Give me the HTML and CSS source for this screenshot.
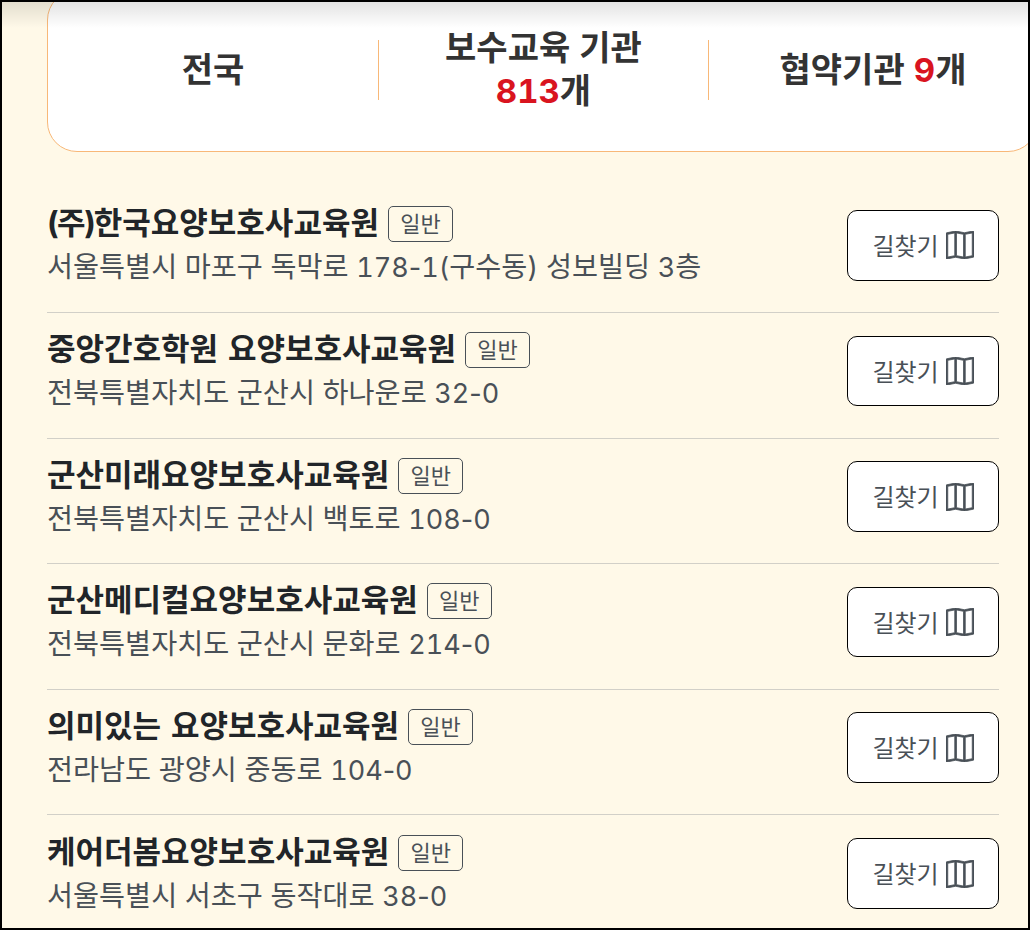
FILE: index.html
```html
<!DOCTYPE html>
<html lang="ko">
  <head>
    <meta charset="utf-8">
    <title>보수교육 기관</title>
    <link rel="stylesheet" href="styles.css">
  </head>
  <body>
    <div class="frame">
      <div class="top-shadow"></div>

      <div class="summary">
        <div class="summary-item">전국</div>
        <div class="summary-item">
          <div>보수교육 기관<br><span class="count">813</span>개</div>
        </div>
        <div class="summary-item">
          <div>협약기관 <span class="count">9</span>개</div>
        </div>
      </div>

      <ul class="center-list">
        <li class="center">
          <div class="center-info">
            <div class="center-name"><span class="corp-mark">(주)</span>한국요양보호사교육원<span class="badge">일반</span></div>
            <div class="center-address">서울특별시 마포구 독막로 <span class="road-no">178<span class="dash">-</span>1(</span>구수동) 성보빌딩 <span class="road-no">3</span>층</div>
          </div>
          <a class="route-button" href="#">길찾기 <svg class="map-icon" viewBox="0 0 16 16"><path d="M15.817.113A.5.5 0 0 1 16 .5v14a.5.5 0 0 1-.402.49l-5 1a.502.502 0 0 1-.196 0L5.5 15.01l-4.902.98A.5.5 0 0 1 0 15.5v-14a.5.5 0 0 1 .402-.49l5-1a.5.5 0 0 1 .196 0L10.5.99l4.902-.98a.5.5 0 0 1 .415.103zM10 1.91l-4-.8v12.98l4 .8V1.91zm1 12.98 4-.8V1.11l-4 .8v12.98zm-6-.8V1.11l-4 .8v12.98l4-.8z"/></svg></a>
        </li>
        <li class="center">
          <div class="center-info">
            <div class="center-name">중앙간호학원 요양보호사교육원<span class="badge">일반</span></div>
            <div class="center-address">전북특별자치도 군산시 하나운로 <span class="road-no">32<span class="dash">-</span>0</span></div>
          </div>
          <a class="route-button" href="#">길찾기 <svg class="map-icon" viewBox="0 0 16 16"><path d="M15.817.113A.5.5 0 0 1 16 .5v14a.5.5 0 0 1-.402.49l-5 1a.502.502 0 0 1-.196 0L5.5 15.01l-4.902.98A.5.5 0 0 1 0 15.5v-14a.5.5 0 0 1 .402-.49l5-1a.5.5 0 0 1 .196 0L10.5.99l4.902-.98a.5.5 0 0 1 .415.103zM10 1.91l-4-.8v12.98l4 .8V1.91zm1 12.98 4-.8V1.11l-4 .8v12.98zm-6-.8V1.11l-4 .8v12.98l4-.8z"/></svg></a>
        </li>
        <li class="center">
          <div class="center-info">
            <div class="center-name">군산미래요양보호사교육원<span class="badge">일반</span></div>
            <div class="center-address">전북특별자치도 군산시 백토로 <span class="road-no">108<span class="dash">-</span>0</span></div>
          </div>
          <a class="route-button" href="#">길찾기 <svg class="map-icon" viewBox="0 0 16 16"><path d="M15.817.113A.5.5 0 0 1 16 .5v14a.5.5 0 0 1-.402.49l-5 1a.502.502 0 0 1-.196 0L5.5 15.01l-4.902.98A.5.5 0 0 1 0 15.5v-14a.5.5 0 0 1 .402-.49l5-1a.5.5 0 0 1 .196 0L10.5.99l4.902-.98a.5.5 0 0 1 .415.103zM10 1.91l-4-.8v12.98l4 .8V1.91zm1 12.98 4-.8V1.11l-4 .8v12.98zm-6-.8V1.11l-4 .8v12.98l4-.8z"/></svg></a>
        </li>
        <li class="center">
          <div class="center-info">
            <div class="center-name">군산메디컬요양보호사교육원<span class="badge">일반</span></div>
            <div class="center-address">전북특별자치도 군산시 문화로 <span class="road-no">214<span class="dash">-</span>0</span></div>
          </div>
          <a class="route-button" href="#">길찾기 <svg class="map-icon" viewBox="0 0 16 16"><path d="M15.817.113A.5.5 0 0 1 16 .5v14a.5.5 0 0 1-.402.49l-5 1a.502.502 0 0 1-.196 0L5.5 15.01l-4.902.98A.5.5 0 0 1 0 15.5v-14a.5.5 0 0 1 .402-.49l5-1a.5.5 0 0 1 .196 0L10.5.99l4.902-.98a.5.5 0 0 1 .415.103zM10 1.91l-4-.8v12.98l4 .8V1.91zm1 12.98 4-.8V1.11l-4 .8v12.98zm-6-.8V1.11l-4 .8v12.98l4-.8z"/></svg></a>
        </li>
        <li class="center">
          <div class="center-info">
            <div class="center-name">의미있는 요양보호사교육원<span class="badge">일반</span></div>
            <div class="center-address">전라남도 광양시 중동로 <span class="road-no">104<span class="dash">-</span>0</span></div>
          </div>
          <a class="route-button" href="#">길찾기 <svg class="map-icon" viewBox="0 0 16 16"><path d="M15.817.113A.5.5 0 0 1 16 .5v14a.5.5 0 0 1-.402.49l-5 1a.502.502 0 0 1-.196 0L5.5 15.01l-4.902.98A.5.5 0 0 1 0 15.5v-14a.5.5 0 0 1 .402-.49l5-1a.5.5 0 0 1 .196 0L10.5.99l4.902-.98a.5.5 0 0 1 .415.103zM10 1.91l-4-.8v12.98l4 .8V1.91zm1 12.98 4-.8V1.11l-4 .8v12.98zm-6-.8V1.11l-4 .8v12.98l4-.8z"/></svg></a>
        </li>
        <li class="center">
          <div class="center-info">
            <div class="center-name">케어더봄요양보호사교육원<span class="badge">일반</span></div>
            <div class="center-address">서울특별시 서초구 동작대로 <span class="road-no">38<span class="dash">-</span>0</span></div>
          </div>
          <a class="route-button" href="#">길찾기 <svg class="map-icon" viewBox="0 0 16 16"><path d="M15.817.113A.5.5 0 0 1 16 .5v14a.5.5 0 0 1-.402.49l-5 1a.502.502 0 0 1-.196 0L5.5 15.01l-4.902.98A.5.5 0 0 1 0 15.5v-14a.5.5 0 0 1 .402-.49l5-1a.5.5 0 0 1 .196 0L10.5.99l4.902-.98a.5.5 0 0 1 .415.103zM10 1.91l-4-.8v12.98l4 .8V1.91zm1 12.98 4-.8V1.11l-4 .8v12.98zm-6-.8V1.11l-4 .8v12.98l4-.8z"/></svg></a>
        </li>
      </ul>
    </div>
  </body>
</html>
```

FILE: styles.css
```css
* {
  box-sizing: border-box;
}
html,
body {
  margin: 0;
  padding: 0;
  height: 930px;
  overflow: hidden;
}
body {
  font-family: Inter, "Noto Sans CJK KR", sans-serif;
  font-variant-numeric: tabular-nums;
  color: #212529;
}
.frame {
  position: relative;
  width: 1030px;
  height: 930px;
  border: 2px solid #000;
  background-color: #fff9e8;
  overflow: hidden;
}
.top-shadow {
  position: absolute;
  top: 0;
  left: 0;
  right: 0;
  height: 26px;
  background: linear-gradient(to bottom, rgba(0, 0, 0, 0.11), rgba(0, 0, 0, 0));
}
.summary {
  display: grid;
  grid-template-columns: 331px 330px 1fr;
  align-items: center;
  width: 991px;
  height: 162px;
  margin: -12px 0 0 45px;
  padding-bottom: 3px;
  background-color: #fff;
  border: 1px solid #f8b878;
  border-radius: 30px;
}
.summary-item {
  display: flex;
  align-items: center;
  justify-content: center;
  height: 60px;
  font-size: 34px;
  font-weight: 700;
  line-height: 43px;
  text-align: center;
  color: #333;
  border-right: 1px solid #f8b878;
}
.summary-item:last-child {
  border-right: none;
}
.count {
  font-size: 33px;
  color: #d9141f;
}
.center-list {
  list-style: none;
  margin: 0 0 0 45px;
  padding: 0;
  width: 952px;
}
.center {
  display: flex;
  align-items: center;
  justify-content: space-between;
  height: 125.5px;
  padding: 22.9px 0 31.1px;
  border-bottom: 1px solid #d2d0c8;
}
.center:first-child {
  height: 161px;
  padding-top: 58px;
  padding-bottom: 31.5px;
}
.center:last-child {
  border-bottom: none;
}
.center-name {
  margin-bottom: 3px;
  font-size: 31px;
  font-weight: 700;
  line-height: 42px;
  word-spacing: 1.5px;
}
.corp-mark {
  letter-spacing: -2px;
}
.badge {
  display: inline-block;
  margin-left: 9px;
  width: 65px;
  height: 36px;
  font-size: 22px;
  font-weight: 400;
  line-height: 35px;
  text-align: center;
  color: #495057;
  border: 1px solid #495057;
  border-radius: 5px;
  vertical-align: 2px;
}
.center-address {
  font-size: 28.3px;
  line-height: 40px;
  color: #495057;
}
.road-no {
  font-size: 27px;
}
.dash {
  font-variant-numeric: normal;
}
.route-button {
  display: flex;
  align-items: center;
  justify-content: center;
  gap: 7px;
  flex-shrink: 0;
  width: 152px;
  height: 70.5px;
  padding-bottom: 2px;
  font-size: 24px;
  color: #495057;
  text-decoration: none;
  background-color: #fff;
  border: 1px solid #000;
  border-radius: 10px;
}
.map-icon {
  width: 28px;
  height: 28px;
  fill: #495057;
  stroke: #495057;
  stroke-width: 0.45;
  margin-top: 2px;
}
```
